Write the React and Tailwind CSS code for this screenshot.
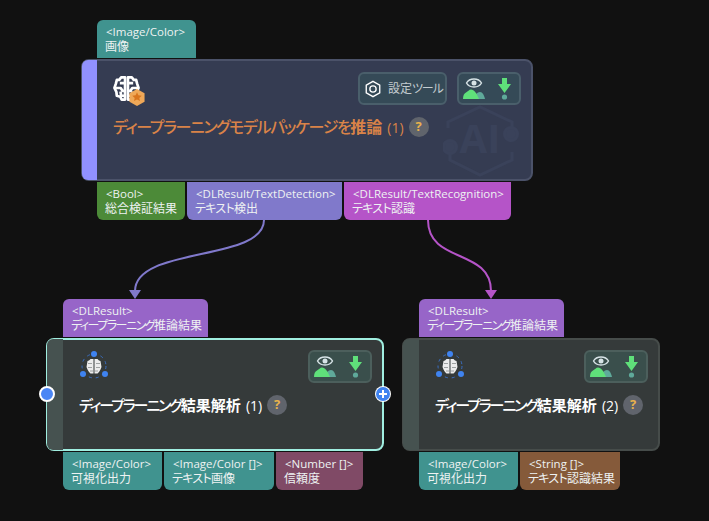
import React from 'react';

const FONT = "font-['Open_Sans','Noto_Sans_CJK_JP',sans-serif] [font-feature-settings:'palt']";

function BrainIcon({ className }) {
  return (
    <svg viewBox="0 0 28 27" className={className} fill="none" stroke="#fff" strokeWidth="2.800" strokeLinecap="square" strokeLinejoin="round">
      <path d="M12.500 2H8.500L6.500 4.500H4L3 8.500 1.500 13 3.500 17 4 21l3.500 1 1.500 3h3.500z" />
      <path d="M15.500 2h4l2 2.500H24l1 4 1.500 4.500-2 4-.5 4-3.500 1-1.500 3h-3.500z" />
      <path d="M12 8H8.500M2.500 13H8l2 3h2M12 21H8.500L8 18" />
      <path d="M16 8h3.500M25.500 13H20l-2 3h-2M16 21h3.500L20 18" />
    </svg>
  );
}

function BadgeBrain() {
  return (
    <div className="relative w-[33px] h-[31px]">
      <BrainIcon className="w-[27px] h-[27px]" />
      <svg viewBox="0 0 16 18" className="absolute left-[16px] top-[14px] w-[16px] h-[17px]">
        <path d="M8 0l8 4.500v9L8 18l-8-4.500v-9z" fill="#efa858" />
        <path d="M8 3.500l1.500 3.200 3.500.4-2.600 2.300.8 3.400L8 11.100l-3.200 1.700.8-3.400L3 7.100l3.500-.4z" fill="#d9751e" />
      </svg>
    </div>
  );
}

function RingBrain() {
  return (
    <svg viewBox="0 0 30 30" className="w-[30px] h-[30px]">
      <circle cx="15" cy="15" r="12" fill="none" stroke="#3a6fc4" strokeWidth="1" strokeDasharray="3 4" />
      <circle cx="15" cy="3" r="3" fill="#3f83f0" />
      <circle cx="4" cy="23" r="3" fill="#3f83f0" />
      <circle cx="26" cy="23" r="3" fill="#3f83f0" />
      <path d="M14.500 8h-3l-1.500 1.500-1.500.5L8 13l-.5 3 1 2.500L10 21l1.500 1.500h3z" fill="#ececec" />
      <path d="M15.500 8h3l1.500 1.500 1.500.5.500 3 .5 3-1 2.500L20 21l-1.500 1.500h-3z" fill="#ececec" />
      <path d="M9 12.500h4M9 16.500h4M11 20h3M17 12.500h4M17 16.500h4M16 20h3" stroke="#8a8f8f" strokeWidth="0.800" />
    </svg>
  );
}

function ViewButtons({ tone }) {
  return (
    <div className={`w-[64px] h-[33px] rounded-md border-2 flex items-center justify-between pl-[4px] pr-[8px] ${tone}`}>
      <svg viewBox="0 0 22 21" className="w-[22px] h-[21px]">
        <path d="M3.500 5C5 2.300 8 1 11 1s6 1.300 7.500 4C17 7.700 14 9 11 9S5 7.700 3.500 5z" fill="none" stroke="#d7e3e6" strokeWidth="1.400" />
        <circle cx="11" cy="5" r="2.500" fill="#d7e3e6" />
        <path d="M11 21c1-4 3-7 6-7 2.500 0 4 3 5 7z" fill="#5fa99a" />
        <path d="M0 21c0-3.500 1-5.500 3-6.500 2-1 3-3 5-3 3 0 6 4 8 9.500z" fill="#5fe07a" />
      </svg>
      <svg viewBox="0 0 13 22" className="w-[13px] h-[22px]">
        <path d="M4 0h5v6h4l-6.500 9L0 6h4z" fill="#5fe07a" />
        <circle cx="6.500" cy="19" r="2.600" fill="#5fa99a" />
      </svg>
    </div>
  );
}

function SettingsButton({ tone }) {
  return (
    <div className={`w-[89px] h-[33px] rounded-md border-2 flex items-center gap-[6px] pl-[4px] text-[12px] text-[#c4ccd0] ${tone}`}>
      <svg viewBox="0 0 20 20" className="w-[18px] h-[18px] shrink-0" fill="none" stroke="#fff" strokeWidth="1.500">
        <path d="M10 1.500l7.500 4.300v8.400L10 18.500l-7.500-4.300V5.800z" />
        <circle cx="10" cy="10" r="3.500" />
      </svg>
      <span className="whitespace-nowrap">設定<span className="tracking-[-1.200px]">ツール</span></span>
    </div>
  );
}

function HelpMark() {
  return (
    <span className="w-[20px] h-[20px] shrink-0 rounded-full bg-[#60646c] text-[#e8b24c] text-[13px] font-bold flex items-center justify-center">?</span>
  );
}

function Port({ type, label, width, color, round }) {
  return (
    <div className={`h-[38px] pl-[9px] pt-[4px] text-[12px] leading-[15px] text-[#eef2f2] whitespace-nowrap ${color} ${round}`} style={{ width }}>
      <div className="text-[11.500px]">{type}</div>
      <div className="-ml-px">{label}</div>
    </div>
  );
}

function AiWatermark() {
  return (
    <svg viewBox="0 0 76 76" className="absolute right-[12px] top-[42px] w-[76px] h-[76px]" fill="none" stroke="#3a425a" strokeWidth="3">
      <path d="M5 25V19L37 4l32 15v12M7 44v13l30 15 32-15v-8" />
      <circle cx="68" cy="31" r="6.500" fill="#3a425a" />
      <circle cx="7" cy="44" r="6.500" fill="#3a425a" />
      <text x="37" y="50" textAnchor="middle" fontSize="40" fontWeight="700" fill="#3a425a" stroke="none" fontFamily="Open Sans, sans-serif">AI</text>
    </svg>
  );
}

function Node({ left, top, width, height, inset, border, stripe, bg, tone, icon, iconPad, rowPad, title, titleClass, titleSize, titleGap, count, inputs, outputs, settings, watermark, children }) {
  return (
    <div className="absolute" style={{ left, top }}>
      <div className={`flex gap-[2px] mb-px ${inset}`}>
        {inputs.map((p) => <Port key={p.type} {...p} round="rounded-t-md" />)}
      </div>
      <div className={`relative flex border-2 rounded-lg ${border} ${bg}`} style={{ width, height }}>
        <div className={`-ml-px -my-px shrink-0 rounded-l-md ${stripe}`} />
        <div className="flex-1 min-w-0 relative pl-[16px] pr-[10px]">
          {watermark && <AiWatermark />}
          <div className={`relative flex justify-between ${rowPad}`}>
            <div className={iconPad}>{icon}</div>
            <div className="flex gap-[10px]">
              {settings && <SettingsButton tone={tone} />}
              <ViewButtons tone={tone} />
            </div>
          </div>
          <div className={`relative flex items-center gap-[5px] h-[24px] ${titleGap}`}>
            <span className={`font-bold whitespace-nowrap ${titleSize} ${titleClass}`}>{title}</span>
            <span className={`text-[14px] font-medium ${titleClass}`}>{count}</span>
            <HelpMark />
          </div>
        </div>
        {children}
      </div>
      <div className={`flex gap-[2px] mt-px ${inset}`}>
        {outputs.map((p) => <Port key={p.type} {...p} round="rounded-b-md" />)}
      </div>
    </div>
  );
}

const teal = 'bg-[#40938f]';
const violet = 'bg-[#9765c8]';
const greenTone = 'bg-[#3a4f4c] border-[#4c5f5c]';

// katakana runs are set tighter than the CJK font's own proportional widths
const deepLearning = <span className="tracking-[-1.500px]">ディープラーニング</span>;
const textKana = <span className="tracking-[-0.700px]">テキスト</span>;
const resultTitle = (
  <>
    <span className="font-medium tracking-[-2.100px]">ディープラーニング</span>
    <span>結果解析</span>
  </>
);

export default function App() {
  return (
    <div className={`relative w-[709px] h-[521px] overflow-hidden bg-[#111111] ${FONT}`}>
      <svg className="absolute inset-0 w-full h-full" viewBox="0 0 709 521" fill="none">
        <path d="M264 220C264 262 135 246 135 291" stroke="#8079cb" strokeWidth="2" />
        <path d="M129 290h12l-6 9z" fill="#8079cb" />
        <path d="M428 220C428 264 491 248 491 291" stroke="#b554c8" strokeWidth="2" />
        <path d="M485 290h12l-6 9z" fill="#b554c8" />
      </svg>

      <Node
        left={81}
        top={20}
        width={452}
        height={122}
        inset="pl-[16px]"
        border="border-[#4b5269]"
        stripe="w-[15px] bg-[#9191ff]"
        bg="bg-[#353c52]"
        tone="bg-[#354a57] border-[#4a5f6b]"
        icon={<BadgeBrain />}
        iconPad="pt-[3px]"
        rowPad="pt-[11px]"
        title={
          <>
            <span className="font-medium tracking-[-1.400px]">ディープラーニングモデルパッケージを</span>
            <span>推論</span>
          </>
        }
        titleClass="text-[#d98348]"
        titleSize="text-[16px]"
        titleGap="mt-[9px]"
        count="(1)"
        settings
        watermark
        inputs={[{ type: '<Image/Color>', label: '画像', width: 99, color: teal }]}
        outputs={[
          { type: '<Bool>', label: '総合検証結果', width: 88, color: 'bg-[#4c8a38]' },
          { type: '<DLResult/TextDetection>', label: <>{textKana}検出</>, width: 155, color: 'bg-[#8079cb]' },
          { type: '<DLResult/TextRecognition>', label: <>{textKana}認識</>, width: 167, color: 'bg-[#b554c8]' },
        ]}
      />

      <Node
        left={46}
        top={299}
        width={338}
        height={113}
        inset="pl-[17px]"
        border="border-[#a0eee0]"
        stripe="w-[16px] bg-[#465250]"
        bg="bg-[#353a3a]"
        tone={greenTone}
        icon={<RingBrain />}
        iconPad="pt-px"
        rowPad="pt-[10px]"
        title={resultTitle}
        titleClass="text-white"
        titleSize="text-[15px]"
        titleGap="mt-[10px]"
        count="(1)"
        inputs={[{ type: '<DLResult>', label: <>{deepLearning}推論結果</>, width: 145, color: violet }]}
        outputs={[
          { type: '<Image/Color>', label: '可視化出力', width: 99, color: teal },
          { type: '<Image/Color []>', label: <>{textKana}画像</>, width: 110, color: teal },
          { type: '<Number []>', label: '信頼度', width: 87, color: 'bg-[#804a66]' },
        ]}
      >
        <span className="absolute -left-[9px] top-[46px] w-[16px] h-[16px] rounded-full bg-[#4a86f5] border-2 border-white" />
        <span className="absolute -right-[9px] top-[46px] w-[16px] h-[16px] rounded-full bg-white flex items-center justify-center">
          <svg viewBox="0 0 14 14" className="w-[14px] h-[14px]">
            <circle cx="7" cy="7" r="7" fill="#3f83f0" />
            <path d="M7 3v8M3 7h8" stroke="#fff" strokeWidth="2" />
          </svg>
        </span>
      </Node>

      <Node
        left={402}
        top={299}
        width={258}
        height={113}
        inset="pl-[17px]"
        border="border-[#464c4a]"
        stripe="w-[16px] bg-[#465250]"
        bg="bg-[#353a3a]"
        tone={greenTone}
        icon={<RingBrain />}
        iconPad="pt-px"
        rowPad="pt-[10px]"
        title={resultTitle}
        titleClass="text-white"
        titleSize="text-[15px]"
        titleGap="mt-[10px]"
        count="(2)"
        inputs={[{ type: '<DLResult>', label: <>{deepLearning}推論結果</>, width: 145, color: violet }]}
        outputs={[
          { type: '<Image/Color>', label: '可視化出力', width: 99, color: teal },
          { type: '<String []>', label: <>{textKana}認識結果</>, width: 100, color: 'bg-[#855a3a]' },
        ]}
      />
    </div>
  );
}
